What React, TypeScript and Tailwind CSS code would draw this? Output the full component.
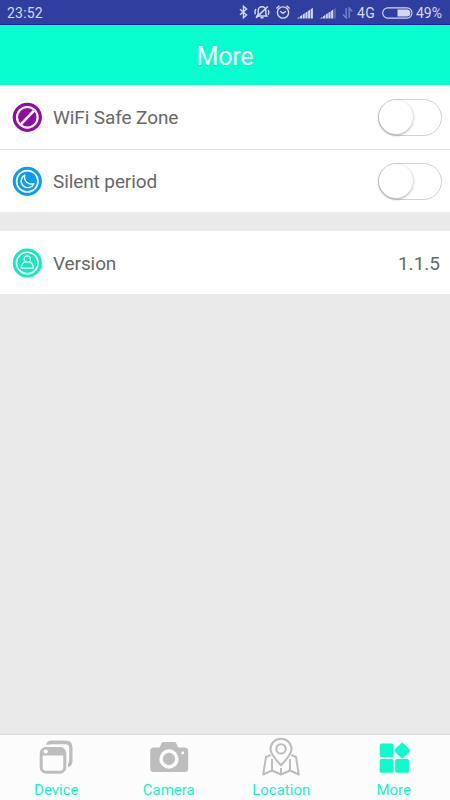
import { ReactNode, useState } from 'react';

interface RowProps {
  icon: ReactNode;
  label: string;
  children: ReactNode;
}

interface TabConfig {
  key: string;
  label: string;
  icon: ReactNode;
}

const SIGNAL_BARS = [
  'M0 11.5 2.400 9.800V11.500Z',
  'M3 9.400 5.100 8V11.500H3Z',
  'M5.700 7.600 7.800 6.200V11.500H5.700Z',
  'M8.400 5.800 10.500 4.400V11.500H8.400Z',
  'M11.100 4 13.200 2.600V11.500H11.100Z',
  'M13.800 2.200 15.900.8V11.500H13.800Z',
];

function BluetoothIcon() {
  return (
    <svg className="mr-px h-3.5 w-2.5 -translate-y-px" viewBox="0 0 10 14" fill="none" stroke="currentColor" strokeWidth="1.4">
      <path d="M2 4.200 8.600 10 5.500 12.700V1.300L8.600 4 2 9.800" />
    </svg>
  );
}

function MutedBellIcon() {
  return (
    <svg className="ml-[5px] h-4 w-4 -translate-y-px" viewBox="0 0 16 16" fill="none" stroke="currentColor" strokeWidth="1.4">
      <path d="M3 12h10L11.800 10V6.500a3.800 3.800 0 0 0-7.600 0V10L3 12Z" />
      <path d="M6.500 13.800h3M13.800 2.500 2 13.800" strokeWidth="1.600" />
      <path d="M2 5Q.3 7.500 1.400 10.300M14.200 6q1.200 2.300 0 4.800" />
    </svg>
  );
}

function AlarmIcon() {
  return (
    <svg className="ml-[5px] h-4 w-4 -translate-y-px" viewBox="0 0 16 16" fill="none" stroke="currentColor" strokeWidth="1.4">
      <circle cx="8" cy="8.500" r="5.600" />
      <path d="M5.200 7.300 8 9.300 10.800 7.300M1.400 4.500 4.400 1.800M14.600 4.500 11.600 1.800" />
    </svg>
  );
}

function SignalIcon({ level, className }: { level: number; className: string }) {
  return (
    <svg className={className} viewBox="0 0 16 12" fill="currentColor">
      {SIGNAL_BARS.map((d, i) => (
        <path key={d} d={d} opacity={i < level ? 1 : 0.25} />
      ))}
    </svg>
  );
}

function StatusBar() {
  return (
    <div className="flex h-[25px] items-center border-b border-[#2a1f9c] bg-[#303f9f] pt-0.5 pr-[7px] pl-[7px] text-[#d4d8ef]">
      <span className="flex-1 text-[14px] tracking-[0.2px]">23:52</span>
      <BluetoothIcon />
      <MutedBellIcon />
      <AlarmIcon />
      <SignalIcon level={6} className="ml-[6px] h-3 w-4" />
      <SignalIcon level={5} className="ml-[7px] h-3 w-4" />
      <svg className="ml-[6px] h-3 w-[11px] text-[#7580c2]" viewBox="0 0 11 12" fill="none" stroke="currentColor" strokeWidth="1.5">
        <path d="M4.200 1v10L1 7.500M7.200 11V1l3 3.500" />
      </svg>
      <span className="ml-[4px] w-[21px] text-[14px] tracking-[0.3px]">4G</span>
      <svg className="ml-[4px] h-3 w-[31px]" viewBox="0 0 31 12" fill="none">
        <rect x=".7" y=".9" width="29.3" height="10.2" rx="5.1" stroke="currentColor" strokeWidth="1.1" />
        <path d="M15.5 2.5h9.3a3.5 3.5 0 0 1 0 7h-9.3Z" fill="currentColor" />
      </svg>
      <span className="ml-[3px] w-[27px] text-[14px]">49%</span>
    </div>
  );
}

function SafeZoneIcon() {
  return (
    <svg className="h-[30px] w-[30px]" viewBox="0 0 30 30" fill="none" stroke="white">
      <circle cx="15.3" cy="15.3" r="14.6" fill="#910b9e" stroke="none" />
      <circle cx="15.3" cy="15.3" r="10.3" strokeWidth="2.2" />
      <path d="M9 22.100 21.800 8.900" strokeWidth="2.6" />
    </svg>
  );
}

function SilentIcon() {
  return (
    <svg className="h-[30px] w-[30px]" viewBox="0 0 30 30" fill="none" stroke="white">
      <circle cx="15.3" cy="15.3" r="14.6" fill="#0a9cf0" stroke="none" />
      <circle cx="15.3" cy="15.3" r="10.7" strokeWidth="1.7" />
      <path d="M12.900 9.100a6.600 6.600 0 1 0 9 8.400 6.800 6.800 0 0 1-9-8.400Z" strokeWidth="1.400" strokeLinejoin="round" />
    </svg>
  );
}

function VersionIcon() {
  return (
    <svg className="h-[30px] w-[30px]" viewBox="0 0 30 30" fill="none" stroke="white">
      <circle cx="15.3" cy="15" r="14.6" fill="#10eabd" stroke="none" />
      <circle cx="15.3" cy="15" r="10.8" strokeWidth="1.6" />
      <circle cx="15.3" cy="11" r="3.100" strokeWidth="1.200" />
      <path d="M13.300 13.900c-2.500.8-4 2.900-4 6.300h12c0-3.400-1.500-5.500-4-6.300" strokeWidth="1.200" strokeLinejoin="round" />
    </svg>
  );
}

const TABS: TabConfig[] = [
  {
    key: 'device',
    label: 'Device',
    icon: (
      <svg className="h-10 w-10 shrink-0" viewBox="0 0 40 40" fill="none" stroke="#bdbdbd">
        <path d="M10 7.8Q10.800 3.500 16 3.500H29.500Q36.500 3.500 36.500 10.500V23.500Q36.500 29 32 30.300V26.500Q33.200 25.500 33.200 23V11Q33.200 7.200 29.500 7.200H16Q13 7.200 12 7.800Z" fill="#bdbdbd" stroke="none" />
        <rect x="5.200" y="11.500" width="23.600" height="23.700" rx="5" strokeWidth="3" />
        <path d="M4.500 18.500v-3Q4.500 10.500 10 10.500h14q5.500 0 5.500 5v3Z" fill="#bdbdbd" stroke="none" />
        <circle cx="9.800" cy="14.500" r="2.100" fill="white" stroke="none" />
      </svg>
    ),
  },
  {
    key: 'camera',
    label: 'Camera',
    icon: (
      <svg className="h-10 w-10 shrink-0" viewBox="0 0 40 40" fill="#bdbdbd">
        <path d="M4.500 10.500h6l2-4.200Q13 5 14.200 5h11.200q1.200 0 1.800 1.300l2 4.200h6.500q3.500 0 3.500 3.500v17.500q0 3.500-3.500 3.500h-31q-3.500 0-3.500-3.500V14q0-3.500 3.300-3.500Z" />
        <circle cx="20" cy="22" r="7.900" fill="none" stroke="#fcfcfc" strokeWidth="3.500" />
        <circle cx="33.700" cy="15.800" r="1.500" fill="#fcfcfc" />
      </svg>
    ),
  },
  {
    key: 'location',
    label: 'Location',
    icon: (
      <svg className="h-10 w-10 shrink-0" viewBox="0 0 40 40" fill="none" stroke="#bdbdbd" strokeWidth="2" strokeLinejoin="round">
        <path d="M20 28.200Q9.500 17.500 9.500 12a10.500 10.200 0 0 1 21 0Q30.500 17.500 20 28.200Z" />
        <circle cx="20" cy="11.900" r="4.700" />
        <path d="M9.500 18 5 20 2.200 37.500 11 33.500 20 37.500 29 33.500 37.800 37.500 35 20 30.500 18M11 22V33.500M29 22V33.500M20 31v6.500" />
      </svg>
    ),
  },
  {
    key: 'more',
    label: 'More',
    icon: (
      <svg className="h-10 w-10 shrink-0" viewBox="0 0 40 40" fill="#0cfccc">
        <rect x="5.700" y="6.600" width="13.800" height="13.500" rx="1.800" />
        <rect x="5.700" y="22" width="13.800" height="13.700" rx="1.800" />
        <rect x="21.200" y="22" width="13.800" height="13.700" rx="1.800" />
        <rect x="22.200" y="7.500" width="12" height="12" rx="1.600" transform="rotate(45 28.200 13.500)" />
      </svg>
    ),
  },
];

function Row({ icon, label, children }: RowProps) {
  return (
    <div className="flex h-full items-center pr-2 pl-[12px]">
      {icon}
      <span className="ml-[11px] flex-1 pt-[3px] text-[19px] tracking-[-0.1px]">{label}</span>
      {children}
    </div>
  );
}

function Toggle({ label }: { label: string }) {
  const [on, setOn] = useState(false);
  return (
    <button
      role="switch"
      aria-checked={on}
      aria-label={label}
      onClick={() => setOn(!on)}
      className={`flex h-[37px] w-16 items-center rounded-full border border-[#d2d2d2] ${on ? 'justify-end bg-[#0cfccc]' : 'bg-white'}`}
    >
      <span className="h-[34px] w-[34px] rounded-full bg-white shadow-[0_1px_3px_rgba(0,0,0,0.35)]" />
    </button>
  );
}

export default function App() {
  const [active, setActive] = useState('more');

  return (
    <div className="flex h-screen flex-col bg-[#eaeaea] font-[Roboto,sans-serif] text-[#686868]">
      <StatusBar />
      <header className="flex h-[60px] items-center justify-center bg-[#08fdcf] pt-1 text-[25px] tracking-[-0.2px] text-white">More</header>

      {/* Settings */}
      <section className="bg-white">
        <div className="h-[65px] border-b border-[#e2e2e2]">
          <Row icon={<SafeZoneIcon />} label="WiFi Safe Zone">
            <Toggle label="WiFi Safe Zone" />
          </Row>
        </div>
        <div className="h-[62px]">
          <Row icon={<SilentIcon />} label="Silent period">
            <Toggle label="Silent period" />
          </Row>
        </div>
      </section>
      <section className="mt-[19px] h-[63px] bg-white">
        <Row icon={<VersionIcon />} label="Version">
          <span className="mr-0.5 pt-[3px] text-[19px]">1.1.5</span>
        </Row>
      </section>

      {/* Bottom tabs */}
      <nav className="mt-auto flex h-[66px] border-t border-[#d9d9d9] bg-[#fcfcfc]">
        {TABS.map(tab => (
          <button
            key={tab.key}
            onClick={() => setActive(tab.key)}
            aria-current={tab.key === active ? 'page' : undefined}
            className="flex flex-1 flex-col items-center justify-start pt-0.5 text-[15px] leading-5 text-[#19f3ca]"
          >
            {tab.icon}
            <span className="pt-[3px]">{tab.label}</span>
          </button>
        ))}
      </nav>
    </div>
  );
}
